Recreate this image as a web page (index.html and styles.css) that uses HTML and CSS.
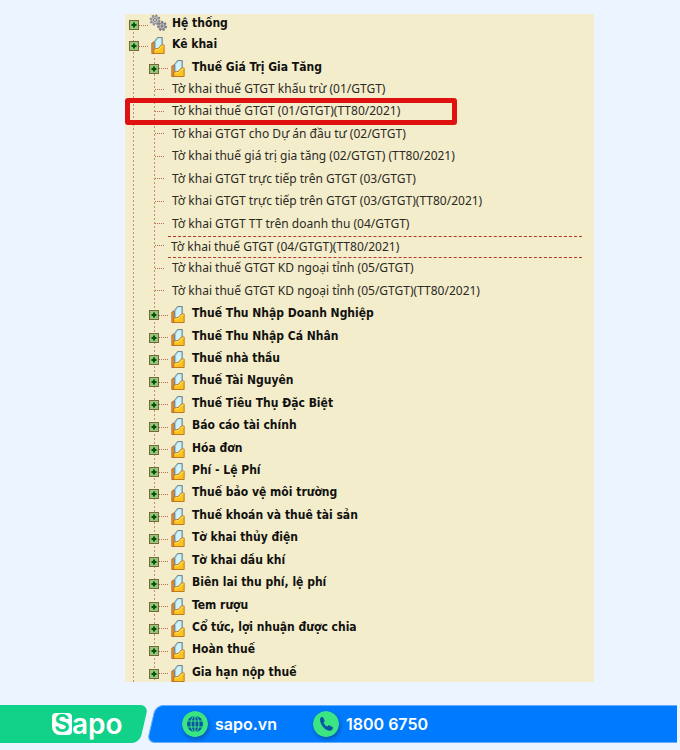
FILE: index.html
```html
<!DOCTYPE html>
<html lang="vi">

<head>
    <meta charset="UTF-8">
    <meta name="viewport" content="width=device-width, initial-scale=1.0">
    <title>Tờ khai thuế GTGT</title>
    <link rel="stylesheet" href="styles.css">
</head>

<body>
    <svg class="symbols" aria-hidden="true">
        <symbol id="plus" viewBox="0 0 10 10">
            <rect x="0.5" y="0.5" width="9" height="9" fill="#94c878" stroke="#77653c"/>
            <path d="M5 2.500v5M2.500 5h5" stroke="#07510d" stroke-width="2"/>
        </symbol>
        <symbol id="folder" viewBox="0 0 14 18">
            <path d="M0.500 6.500L3 5v12.500H0.500z" fill="#e69a35" stroke="#b3632a"/>
            <path d="M3.500 4.500l3-4h5V11L3.500 15z" fill="#a9dcea" stroke="#6d7f86"/>
            <path d="M5 5l2.500-3.500H10v8l-5 3z" fill="#d3f3fa"/>
            <path d="M2.500 17.500V13l5-1 3-3.500h3v9z" fill="#fbc41d" stroke="#bd721f"/>
            <path d="M3.500 14l4.500-1 3-3.500h2" fill="none" stroke="#ffe36a"/>
        </symbol>
        <symbol id="gears" viewBox="0 0 18 18">
            <circle cx="6" cy="6" r="4.500" fill="#c4c4c8" stroke="#85858b" stroke-width="2" stroke-dasharray="2 1.500"/>
            <circle cx="6" cy="6" r="3.500" fill="#c9c9ce" stroke="#96969c"/>
            <circle cx="6" cy="6" r="1.500" fill="#f4edcb" stroke="#77777d"/>
            <circle cx="13" cy="12" r="4" fill="#b5b5ba" stroke="#77777d" stroke-width="2" stroke-dasharray="2 1.500"/>
            <circle cx="13" cy="12" r="3" fill="#bdbdc3" stroke="#8b8b91"/>
            <circle cx="13" cy="12" r="1" fill="#f4edcb" stroke="#66666c"/>
        </symbol>
    </svg>

    <main>
        <ul class="tree">
            <li class="group root"><button aria-label="Mở Hệ thống"><svg><use href="#plus"/></svg></button><svg class="icon gears"><use href="#gears"/></svg><span>Hệ thống</span></li>
            <li class="group root"><button aria-label="Mở Kê khai"><svg><use href="#plus"/></svg></button><svg class="icon"><use href="#folder"/></svg><span>Kê khai</span></li>
            <li class="group"><button aria-label="Mở Thuế Giá Trị Gia Tăng"><svg><use href="#plus"/></svg></button><svg class="icon"><use href="#folder"/></svg><span>Thuế Giá Trị Gia Tăng</span></li>
            <li class="leaf"><a href="#">Tờ khai thuế GTGT khấu trừ (01/GTGT)</a></li>
            <li class="leaf marked"><a href="#">Tờ khai thuế GTGT (01/GTGT)(TT80/2021)</a></li>
            <li class="leaf"><a href="#">Tờ khai GTGT cho Dự án đầu tư (02/GTGT)</a></li>
            <li class="leaf"><a href="#">Tờ khai thuế giá trị gia tăng (02/GTGT) (TT80/2021)</a></li>
            <li class="leaf"><a href="#">Tờ khai GTGT trực tiếp trên GTGT (03/GTGT)</a></li>
            <li class="leaf"><a href="#">Tờ khai GTGT trực tiếp trên GTGT (03/GTGT)(TT80/2021)</a></li>
            <li class="leaf"><a href="#">Tờ khai GTGT TT trên doanh thu (04/GTGT)</a></li>
            <li class="leaf focused"><a href="#">Tờ khai thuế GTGT (04/GTGT)(TT80/2021)</a></li>
            <li class="leaf"><a href="#">Tờ khai thuế GTGT KD ngoại tỉnh (05/GTGT)</a></li>
            <li class="leaf"><a href="#">Tờ khai thuế GTGT KD ngoại tỉnh (05/GTGT)(TT80/2021)</a></li>
            <li class="group"><button aria-label="Mở Thuế Thu Nhập Doanh Nghiệp"><svg><use href="#plus"/></svg></button><svg class="icon"><use href="#folder"/></svg><span>Thuế Thu Nhập Doanh Nghiệp</span></li>
            <li class="group"><button aria-label="Mở Thuế Thu Nhập Cá Nhân"><svg><use href="#plus"/></svg></button><svg class="icon"><use href="#folder"/></svg><span>Thuế Thu Nhập Cá Nhân</span></li>
            <li class="group"><button aria-label="Mở Thuế nhà thầu"><svg><use href="#plus"/></svg></button><svg class="icon"><use href="#folder"/></svg><span>Thuế nhà thầu</span></li>
            <li class="group"><button aria-label="Mở Thuế Tài Nguyên"><svg><use href="#plus"/></svg></button><svg class="icon"><use href="#folder"/></svg><span>Thuế Tài Nguyên</span></li>
            <li class="group"><button aria-label="Mở Thuế Tiêu Thụ Đặc Biệt"><svg><use href="#plus"/></svg></button><svg class="icon"><use href="#folder"/></svg><span>Thuế Tiêu Thụ Đặc Biệt</span></li>
            <li class="group"><button aria-label="Mở Báo cáo tài chính"><svg><use href="#plus"/></svg></button><svg class="icon"><use href="#folder"/></svg><span>Báo cáo tài chính</span></li>
            <li class="group"><button aria-label="Mở Hóa đơn"><svg><use href="#plus"/></svg></button><svg class="icon"><use href="#folder"/></svg><span>Hóa đơn</span></li>
            <li class="group"><button aria-label="Mở Phí - Lệ Phí"><svg><use href="#plus"/></svg></button><svg class="icon"><use href="#folder"/></svg><span>Phí - Lệ Phí</span></li>
            <li class="group"><button aria-label="Mở Thuế bảo vệ môi trường"><svg><use href="#plus"/></svg></button><svg class="icon"><use href="#folder"/></svg><span>Thuế bảo vệ môi trường</span></li>
            <li class="group"><button aria-label="Mở Thuế khoán và thuê tài sản"><svg><use href="#plus"/></svg></button><svg class="icon"><use href="#folder"/></svg><span>Thuế khoán và thuê tài sản</span></li>
            <li class="group"><button aria-label="Mở Tờ khai thủy điện"><svg><use href="#plus"/></svg></button><svg class="icon"><use href="#folder"/></svg><span>Tờ khai thủy điện</span></li>
            <li class="group"><button aria-label="Mở Tờ khai dầu khí"><svg><use href="#plus"/></svg></button><svg class="icon"><use href="#folder"/></svg><span>Tờ khai dầu khí</span></li>
            <li class="group"><button aria-label="Mở Biên lai thu phí, lệ phí"><svg><use href="#plus"/></svg></button><svg class="icon"><use href="#folder"/></svg><span>Biên lai thu phí, lệ phí</span></li>
            <li class="group"><button aria-label="Mở Tem rượu"><svg><use href="#plus"/></svg></button><svg class="icon"><use href="#folder"/></svg><span>Tem rượu</span></li>
            <li class="group"><button aria-label="Mở Cổ tức, lợi nhuận được chia"><svg><use href="#plus"/></svg></button><svg class="icon"><use href="#folder"/></svg><span>Cổ tức, lợi nhuận được chia</span></li>
            <li class="group"><button aria-label="Mở Hoàn thuế"><svg><use href="#plus"/></svg></button><svg class="icon"><use href="#folder"/></svg><span>Hoàn thuế</span></li>
            <li class="group"><button aria-label="Mở Gia hạn nộp thuế"><svg><use href="#plus"/></svg></button><svg class="icon"><use href="#folder"/></svg><span>Gia hạn nộp thuế</span></li>
        </ul>
    </main>

    <footer>
        <div class="brand">
            <div class="logo"><span class="logo-s">S</span><span>apo</span></div>
        </div>
        <div class="contact">
            <a href="#">
                <svg class="badge" viewBox="0 0 26 26">
                    <circle cx="13" cy="13" r="13" fill="#3be581"/>
                    <circle cx="13" cy="13" r="8" fill="#0756a4"/>
                    <path d="M5 10h16M5 16h16M13 5v16" stroke="#3be581" fill="none"/>
                    <ellipse cx="13" cy="13" rx="4" ry="8" stroke="#3be581" fill="none"/>
                </svg>
                sapo.vn
            </a>
            <a href="#">
                <svg class="badge" viewBox="0 0 26 26">
                    <circle cx="13" cy="13" r="13" fill="#3be581"/>
                    <path d="M7 8c0-1 1-2 2-2 1 0 1 0 1.500 1l1 2.500c.3 1 0 1.300-1 2.200 1 2 2 3 3.800 3.800 1-1.200 1.300-1.400 2.200-1l2.500 1.200c1 .4 1 1 .7 2-.4 1.300-1.500 2-2.700 2C12 19.500 7 14 7 8z" fill="#0756a4"/>
                </svg>
                1800 6750
            </a>
        </div>
    </footer>
</body>

</html>
```
FILE: styles.css
```css
*,
*::before,
*::after {
    box-sizing: border-box;
}

body {
    margin: 0;
    min-height: 100vh;
    display: flex;
    flex-direction: column;
    background-color: #ecf4ff;
}

.symbols {
    display: none;
}

main {
    flex: 1;
    display: flex;
    padding: 14px 86px 23px 125px;
}

/* the two dotted guides run behind the rows */
.tree {
    flex: 1;
    display: grid;
    grid-template-rows: 18px;
    grid-auto-rows: minmax(22px, 1fr);
    margin: 0;
    padding: 0;
    list-style: none;
    font-family: "DejaVu Sans Condensed", "DejaVu Sans", sans-serif;
    font-size: 12px;
    color: #2b2a25;
    background-color: #f4edcb;
    background-image:
        repeating-linear-gradient(#c98a78 0 2px, transparent 2px 4px),
        repeating-linear-gradient(#c98a78 0 2px, transparent 2px 4px);
    background-size: 1px 100%;
    background-position: 8px 14px, 29px 44px;
    background-repeat: no-repeat;
}

.tree li {
    display: flex;
    align-items: center;
    padding-top: 2px;
    line-height: 18px;
    white-space: nowrap;
}

.tree li:first-child {
    padding-top: 0;
}

.group {
    padding-left: 24px;
    font-weight: bold;
    color: #11110f;
}

.root {
    padding-left: 4px;
}

.group button {
    display: flex;
    align-items: center;
    width: 19px;
    height: 10px;
    margin-top: 4px;
    padding: 0;
    border: none;
    background: none;
    cursor: pointer;
}

.group button svg {
    flex: none;
    width: 10px;
    height: 10px;
}

.group button::after,
.leaf::before {
    content: "";
    width: 9px;
    border-top: 1px dotted #c06a58;
}

.icon {
    flex: none;
    width: 14px;
    height: 17px;
    margin: 3px 7px 0 3px;
}

.gears {
    width: 18px;
    height: 18px;
    margin: 0 5px 0 1px;
}

.leaf {
    gap: 8px;
    padding-left: 30px;
    font-family: "Noto Sans", sans-serif;
}

.leaf a {
    color: inherit;
    text-decoration: none;
}

.focused a {
    flex: 1;
    margin: 0 12px -2px -4px;
    padding-left: 3px;
    line-height: 20px;
    border-top: 1px dashed #b5392b;
    border-bottom: 1px dashed #b5392b;
}

.marked {
    position: relative;
}

.marked::after {
    content: "";
    position: absolute;
    top: -1px;
    bottom: -3px;
    left: 0;
    width: 332px;
    border: 5px solid #df1111;
    border-radius: 3px;
    pointer-events: none;
}

footer {
    display: flex;
    gap: 2px;
    height: 38px;
    margin: 0 3px 7px 0;
    font-family: Inter, sans-serif;
    font-weight: 600;
    color: white;
}

.brand,
.contact {
    position: relative;
    z-index: 0;
    display: flex;
    align-items: center;
    overflow: hidden;
}

/* slanted ends of the two bars */
.brand::before,
.contact::before {
    content: "";
    position: absolute;
    z-index: -1;
    top: 0;
    bottom: 0;
    left: -20px;
    right: 4px;
    border-radius: 8px;
    background-color: #12d188;
    transform: skewX(-13deg);
}

.contact::before {
    left: 4px;
    right: -20px;
    background-color: #007bff;
    border: 1px solid #65adff;
}

.brand {
    width: 148px;
    padding-left: 52px;
}

.contact {
    margin-left: -3px;
}

.logo {
    display: flex;
    align-items: center;
    font-size: 28px;
    line-height: 30px;
}

.logo-s {
    width: 20px;
    border-radius: 4px 4px 4px 8px;
    background-color: white;
    color: #12d188;
    font-size: 24px;
    line-height: 22px;
    text-align: center;
}

.contact {
    flex: 1;
    gap: 36px;
    padding-left: 35px;
    font-size: 16px;
}

.contact a {
    display: flex;
    align-items: center;
    gap: 7px;
    color: inherit;
    text-decoration: none;
}

.badge {
    width: 26px;
    height: 26px;
    border-radius: 50%;
    box-shadow: 1px 2px 4px #0756a4;
}
```
